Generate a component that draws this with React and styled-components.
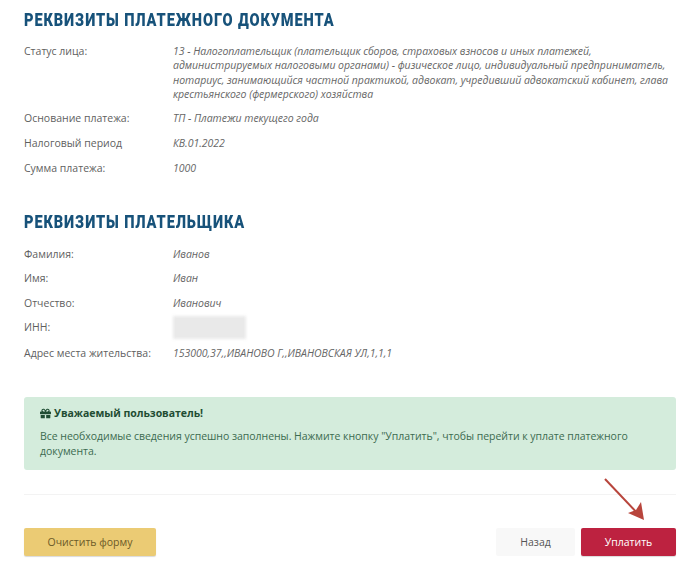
import React from 'react';
import styled, { createGlobalStyle } from 'styled-components';
import { FaGift } from 'react-icons/fa';

const GlobalStyle = createGlobalStyle`
    html, body {
        margin: 0;
        padding: 0;
        background: #fff;
    }
`;

const Page = styled.div`
    position: relative;
    width: 700px;
    height: 572px;
    box-sizing: border-box;
    padding: 10px 24px 0;
    overflow: hidden;
    font-family: "Open Sans", sans-serif;
    font-size: 10.5px;
    line-height: 14.3px;
    color: #5f5f5f;
`;

const Heading = styled.h2`
    margin: ${props => props.$top || 0}px 0 0;
    font-family: "Roboto", sans-serif;
    font-size: 18px;
    line-height: 20px;
    font-weight: 900;
    letter-spacing: 1.1px;
    white-space: nowrap;
    color: #17527a;
    transform: scaleX(0.81);
    transform-origin: left center;
`;

const Rows = styled.div`
    display: flex;
    flex-direction: column;
    gap: 10.25px;
    margin-top: ${props => props.$top}px;
`;

const Row = styled.div`
    display: flex;
`;

const Label = styled.div`
    flex: 0 0 149px;
`;

const Value = styled.div`
    flex: 1;
    font-style: italic;
    letter-spacing: -0.03px;
    color: #666;
`;

const Hidden = styled.div`
    width: 73px;
    height: 23px;
    margin: -4px 0;
    background: #e9e9e9;
    filter: blur(1.5px);
`;

const Alert = styled.div`
    margin-top: 37px;
    padding: 9px 16px 12px;
    background: #d4ecdc;
    border-radius: 3px;
    letter-spacing: -0.03px;
    color: #3c6b50;
`;

const AlertTitle = styled.div`
    display: flex;
    align-items: center;
    gap: 3px;
    font-weight: 700;
    color: #1f4d33;
    margin-bottom: 9px;
`;

const Divider = styled.hr`
    margin: 24px 0 0;
    border: 0;
    border-top: 1px solid #f3f3f3;
`;

const Footer = styled.div`
    display: flex;
    align-items: center;
    gap: 6px;
    margin-top: 33px;
`;

const Button = styled.button`
    height: 28px;
    padding: 0;
    border: 0;
    border-radius: 2px;
    font-family: inherit;
    font-size: 10.5px;
    width: ${props => props.$width}px;
    background: ${props => props.$bg};
    color: ${props => props.$color};
    box-shadow: ${props => props.$flat ? 'none' : '0 1px 1px rgba(0, 0, 0, 0.15)'};
`;

const Spacer = styled.div`
    flex: 1;
`;

const Arrow = styled.svg`
    position: absolute;
    left: 600px;
    top: 474px;
    width: 50px;
    height: 50px;
`;

const paymentRows = [
    ['Основание платежа:', 'ТП - Платежи текущего года'],
    ['Налоговый период', 'КВ.01.2022'],
    ['Сумма платежа:', '1000'],
];

const payerRows = [
    ['Фамилия:', 'Иванов'],
    ['Имя:', 'Иван'],
    ['Отчество:', 'Иванович'],
];

const App = () => {
    return (
        <>
            <GlobalStyle />
            <Page>
                <Heading>РЕКВИЗИТЫ ПЛАТЕЖНОГО ДОКУМЕНТА</Heading>
                <Rows $top={14}>
                    <Row>
                        <Label>Статус лица:</Label>
                        <Value>
                            13 - Налогоплательщик (плательщик сборов, страховых взносов и иных платежей,<br />
                            администрируемых налоговыми органами) - физическое лицо, индивидуальный предприниматель,<br />
                            нотариус, занимающийся частной практикой, адвокат, учредивший адвокатский кабинет, глава<br />
                            крестьянского (фермерского) хозяйства
                        </Value>
                    </Row>
                    {paymentRows.map(([label, value]) => (
                        <Row key={label}>
                            <Label>{label}</Label>
                            <Value>{value}</Value>
                        </Row>
                    ))}
                </Rows>

                <Heading $top={37}>РЕКВИЗИТЫ ПЛАТЕЛЬЩИКА</Heading>
                <Rows $top={15}>
                    {payerRows.map(([label, value]) => (
                        <Row key={label}>
                            <Label>{label}</Label>
                            <Value>{value}</Value>
                        </Row>
                    ))}
                    <Row>
                        <Label>ИНН:</Label>
                        <Value><Hidden /></Value>
                    </Row>
                    <Row>
                        <Label>Адрес места жительства:</Label>
                        <Value>153000,37,,ИВАНОВО Г,,ИВАНОВСКАЯ УЛ,1,1,1</Value>
                    </Row>
                </Rows>

                <Alert>
                    <AlertTitle><FaGift size={11} /> Уважаемый пользователь!</AlertTitle>
                    Все необходимые сведения успешно заполнены. Нажмите кнопку "Уплатить", чтобы перейти к уплате платежного<br />
                    документа.
                </Alert>
                <Divider />
                <Footer>
                    <Button $width={132} $bg="#ebcb74" $color="#6b5a28">Очистить форму</Button>
                    <Spacer />
                    <Button $width={79} $bg="#f8f8f8" $color="#555" $flat>Назад</Button>
                    <Button $width={95} $bg="#bd2240" $color="#fff">Уплатить</Button>
                </Footer>

                <Arrow viewBox="0 0 50 50">
                    <path d="M5 5 L41 43" stroke="#b8453c" strokeWidth="2" fill="none" />
                    <path d="M44 46 L28 39 L36 36 L41 28 Z" fill="#b8453c" />
                </Arrow>
            </Page>
        </>
    );
};

export default App;
